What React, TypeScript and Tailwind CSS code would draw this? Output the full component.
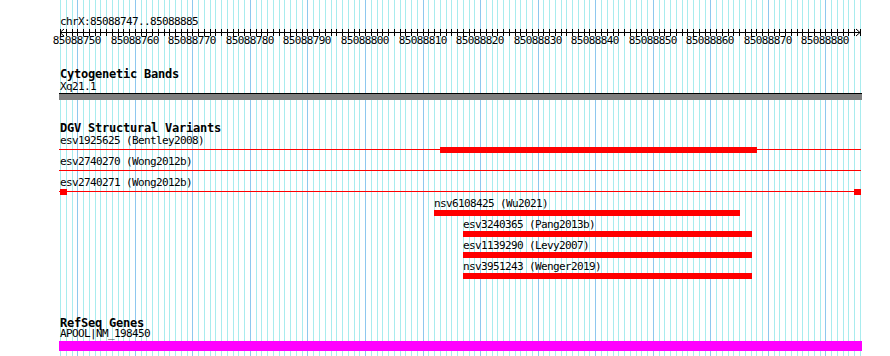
const START = 85088747;
const BASES = 139;
const PX = 800 / BASES;

const guideX = (i: number) => Math.round(60 + i * PX);

interface TrackRow {
    label: string;
    line: boolean;
    indent: number;
    bars: [number, number][];
}

const rows: TrackRow[] = [
    {label: "esv1925625 (Bentley2008)", line: true, indent: 0, bars: [[381, 317]]},
    {label: "esv2740270 (Wong2012b)", line: true, indent: 0, bars: []},
    {label: "esv2740271 (Wong2012b)", line: true, indent: 0, bars: [[1, 7], [795, 7]]},
    {label: "nsv6108425 (Wu2021)", line: false, indent: 374, bars: [[375, 306]]},
    {label: "esv3240365 (Pang2013b)", line: false, indent: 403, bars: [[404, 289]]},
    {label: "esv1139290 (Levy2007)", line: false, indent: 403, bars: [[404, 289]]},
    {label: "nsv3951243 (Wenger2019)", line: false, indent: 403, bars: [[404, 289]]},
];

function Guidelines() {
    const lines = [];
    for (let i = 0; i <= BASES; i++) {
        const major = (START + i) % 10 === 0;
        lines.push(
            <line key={i} x1={guideX(i) + 0.5} x2={guideX(i) + 0.5} y1={0} y2={356}
                  stroke={major ? "#8ec8ee" : "#a8ecee"} strokeWidth={1}/>
        );
    }
    return (
        <svg className="absolute inset-0 pointer-events-none" width={890} height={356}>
            {lines}
        </svg>
    );
}

function Ruler() {
    const ticks = [];
    const labels = [];
    for (let i = 0; i <= BASES; i++) {
        const x = guideX(i) + 0.5;
        ticks.push(<line key={i} x1={x} x2={x} y1={1} y2={8} stroke="#000"/>);
        if ((START + i) % 10 === 0) {
            labels.push(
                <text key={i} x={x - 0.7} y={15.5} textAnchor="middle" fontSize={11} letterSpacing={-0.62} fill="#000">
                    {START + i}
                </text>
            );
        }
    }
    return (
        <svg className="block -ml-[59px]" width={890} height={18}>
            <line x1={60} x2={860} y1={4.5} y2={4.5} stroke="#000"/>
            <polyline points="64,1 60,4.5 64,8" fill="none" stroke="#000"/>
            <polyline points="856,1 860,4.5 856,8" fill="none" stroke="#000"/>
            {ticks}
            {labels}
        </svg>
    );
}

function Row({row}: { row: TrackRow }) {
    return (
        <div className="h-[21px]">
            <div className="h-[12px] leading-[12px] text-[11px] tracking-[-0.62px] pl-px whitespace-nowrap"
                 style={{marginLeft: row.indent}}>
                {row.label}
            </div>
            <svg className="block" width={803} height={6}>
                {row.line && <rect x={0} y={2} width={802} height={1} fill="#ff0000"/>}
                {row.bars.map(([x, w], i) => (
                    <rect key={i} x={x} y={0} width={w} height={6} fill="#ff0000"/>
                ))}
            </svg>
        </div>
    );
}

export default function App() {
    return (
        <div className="relative w-[890px] h-[356px] bg-white overflow-hidden text-black font-['DejaVu_Sans_Mono',monospace]">
            <Guidelines/>
            <div className="relative flex flex-col pl-[59px]">
                <div className="mt-[16px] h-[12px] leading-[12px] text-[11px] tracking-[-0.62px] pl-px">
                    chrX:85088747..85088885
                </div>
                <Ruler/>

                <div className="mt-[22px] h-[13px] leading-[13px] text-[12px] font-bold tracking-[-0.22px] pl-px">
                    Cytogenetic Bands
                </div>
                <div className="h-[12px] leading-[12px] text-[11px] tracking-[-0.62px] pl-px">Xq21.1</div>
                <div className="w-[803px] h-[7px] border-t border-black bg-[#7f7f7f]"/>

                <div className="mt-[21px] h-[14px] leading-[14px] text-[12px] font-bold tracking-[-0.22px] pl-px">
                    DGV Structural Variants
                </div>
                {rows.map((row, i) => <Row key={i} row={row}/>)}

                <div className="mt-[35px] h-[12px] leading-[12px] text-[12px] font-bold tracking-[-0.22px] pl-px">
                    RefSeq Genes
                </div>
                <div className="h-[12px] leading-[10px] text-[11px] tracking-[-0.62px] pl-px">APOOL|NM_198450</div>
                <div className="w-[803px] h-[10px] bg-[#ff00ff]"/>
            </div>
        </div>
    );
}
